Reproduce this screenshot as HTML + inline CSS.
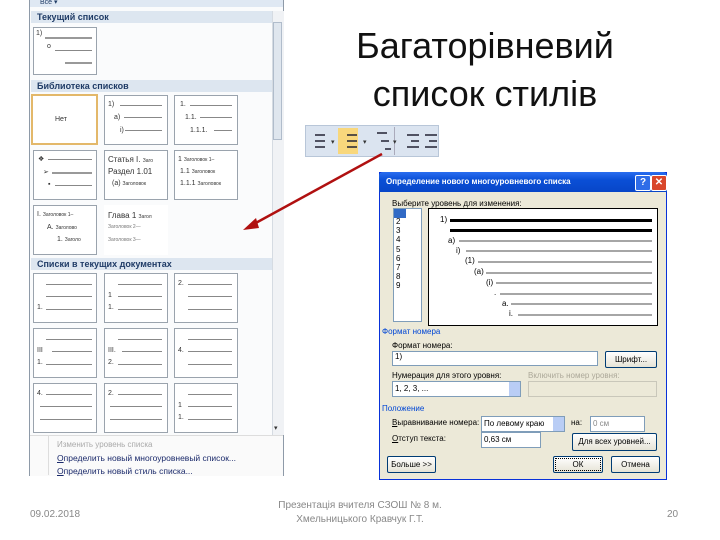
<!DOCTYPE html>
<html><head><meta charset="utf-8"><style>
body{margin:0;width:720px;height:540px;background:#fff;position:relative;overflow:hidden;font-family:"Liberation Sans",sans-serif}
.a{position:absolute}
.hd{position:absolute;left:31px;width:241px;height:12px;background:#dde6f0;font-size:9px;font-weight:bold;color:#1f3b66;line-height:12px;padding-left:6px;box-sizing:border-box}
.bx{position:absolute;width:64px;height:50px;border:1px solid #9aa3ad;background:#fff;box-sizing:border-box}
.ln{position:absolute;height:1px;background:#888}
.t{position:absolute;font-size:7px;color:#333;white-space:nowrap}
.dl{position:absolute;font-size:8px;color:#000;white-space:nowrap}
.btn{position:absolute;border:1px solid #003c74;background:linear-gradient(#fff,#e6e3d6);border-radius:2px;font-size:8px;text-align:center;box-sizing:border-box}
.inp{position:absolute;border:1px solid #7f9db9;background:#fff;box-sizing:border-box;font-size:8px;padding-left:2px}
.gl{position:absolute;height:2px;background:#a6a6a6}
</style></head><body>
<div class="a" style="left:29px;top:0;width:255px;height:476px;border:1px solid #8e9aa8;background:#fafbfc;box-sizing:border-box"></div>
<div class="a" style="left:30px;top:0;width:253px;height:7px;background:#dfe8f3"></div>
<div class="t" style="left:40px;top:-2px;font-size:7px;color:#1f3b66">Все ▾</div>
<div class="hd" style="top:11px">Текущий список</div>
<div class="bx" style="left:33px;top:27px;height:48px"></div>
<div class="t" style="left:36px;top:30px">1)</div><div class="ln" style="left:45px;top:37px;width:47px;height:2px;background:#999"></div>
<div class="t" style="left:47px;top:43px">o</div><div class="ln" style="left:55px;top:50px;width:37px"></div>
<div class="ln" style="left:65px;top:62px;width:27px;height:2px;background:#999"></div>
<div class="hd" style="top:80px">Библиотека списков</div>
<div class="bx" style="left:31px;top:94px;height:51px;width:67px;border:2px solid #e3b86a"></div>
<div class="t" style="left:55px;top:116px">Нет</div>
<div class="bx" style="left:104px;top:95px"></div><div class="bx" style="left:174px;top:95px"></div>
<div class="bx" style="left:33px;top:150px"></div><div class="bx" style="left:104px;top:150px"></div><div class="bx" style="left:174px;top:150px"></div>
<div class="bx" style="left:33px;top:205px"></div><div class="bx" style="left:104px;top:205px;border:none"></div>
<div class="t" style="left:108px;top:101px">1)</div><div class="ln" style="left:120px;top:105px;width:42px"></div>
<div class="t" style="left:114px;top:114px">a)</div><div class="ln" style="left:124px;top:117px;width:38px"></div>
<div class="t" style="left:120px;top:127px">i)</div><div class="ln" style="left:125px;top:130px;width:37px"></div>
<div class="t" style="left:180px;top:101px">1.</div><div class="ln" style="left:190px;top:105px;width:42px"></div>
<div class="t" style="left:185px;top:114px">1.1.</div><div class="ln" style="left:200px;top:117px;width:32px"></div>
<div class="t" style="left:190px;top:127px">1.1.1.</div><div class="ln" style="left:214px;top:130px;width:18px"></div>
<div class="t" style="left:38px;top:155px">❖</div><div class="ln" style="left:48px;top:159px;width:44px"></div>
<div class="t" style="left:43px;top:168px">➢</div><div class="ln" style="left:52px;top:172px;width:40px;height:2px;background:#999"></div>
<div class="t" style="left:48px;top:181px">▪</div><div class="ln" style="left:55px;top:185px;width:37px"></div>
<div class="t" style="left:108px;top:155px;font-size:8px">Статья I. <span style="font-size:5px">Заго</span></div>
<div class="t" style="left:108px;top:167px;font-size:8px">Раздел 1.01</div>
<div class="t" style="left:112px;top:180px">(a) <span style="font-size:5px">Заголовок</span></div>
<div class="t" style="left:178px;top:156px">1 <span style="font-size:5px">Заголовок 1–</span></div>
<div class="t" style="left:180px;top:168px">1.1 <span style="font-size:5px">Заголовок</span></div>
<div class="t" style="left:180px;top:180px">1.1.1 <span style="font-size:5px">Заголовок</span></div>
<div class="t" style="left:37px;top:211px">I. <span style="font-size:5px">Заголовок 1–</span></div>
<div class="t" style="left:47px;top:224px">A. <span style="font-size:5px">Заголово</span></div>
<div class="t" style="left:57px;top:236px">1. <span style="font-size:5px">Заголо</span></div>
<div class="t" style="left:108px;top:211px;font-size:8px">Глава 1 <span style="font-size:5px">Загол</span></div>
<div class="t" style="left:108px;top:224px;font-size:5px;color:#777">Заголовок 2—</div>
<div class="t" style="left:108px;top:237px;font-size:5px;color:#777">Заголовок 3—</div>
<div class="hd" style="top:258px">Списки в текущих документах</div>
<div class="bx" style="left:33px;top:273px"></div><div class="bx" style="left:104px;top:273px"></div><div class="bx" style="left:174px;top:273px"></div>
<div class="bx" style="left:33px;top:328px"></div><div class="bx" style="left:104px;top:328px"></div><div class="bx" style="left:174px;top:328px"></div>
<div class="bx" style="left:33px;top:383px"></div><div class="bx" style="left:104px;top:383px"></div><div class="bx" style="left:174px;top:383px"></div>
<div class="ln" style="left:46px;top:284px;width:46px"></div><div class="ln" style="left:46px;top:296px;width:46px"></div><div class="ln" style="left:46px;top:309px;width:46px"></div>
<div class="ln" style="left:118px;top:284px;width:44px"></div><div class="ln" style="left:118px;top:296px;width:44px"></div><div class="ln" style="left:118px;top:309px;width:44px"></div>
<div class="ln" style="left:188px;top:284px;width:44px"></div><div class="ln" style="left:188px;top:296px;width:44px"></div><div class="ln" style="left:188px;top:309px;width:44px"></div>
<div class="ln" style="left:46px;top:339px;width:46px"></div><div class="ln" style="left:52px;top:351px;width:40px"></div><div class="ln" style="left:46px;top:364px;width:46px"></div>
<div class="ln" style="left:118px;top:339px;width:44px"></div><div class="ln" style="left:122px;top:351px;width:40px"></div><div class="ln" style="left:118px;top:364px;width:44px"></div>
<div class="ln" style="left:188px;top:339px;width:44px"></div><div class="ln" style="left:188px;top:351px;width:44px"></div><div class="ln" style="left:188px;top:364px;width:44px"></div>
<div class="ln" style="left:46px;top:394px;width:46px"></div><div class="ln" style="left:40px;top:406px;width:52px"></div><div class="ln" style="left:40px;top:419px;width:52px"></div>
<div class="ln" style="left:118px;top:394px;width:44px"></div><div class="ln" style="left:110px;top:406px;width:52px"></div><div class="ln" style="left:110px;top:419px;width:52px"></div>
<div class="ln" style="left:188px;top:394px;width:44px"></div><div class="ln" style="left:188px;top:406px;width:44px"></div><div class="ln" style="left:188px;top:419px;width:44px"></div>
<div class="t" style="left:37px;top:304px">1.</div><div class="t" style="left:108px;top:292px">1</div><div class="t" style="left:108px;top:304px">1.</div><div class="t" style="left:178px;top:280px">2.</div>
<div class="t" style="left:37px;top:347px">III</div><div class="t" style="left:37px;top:359px">1.</div><div class="t" style="left:108px;top:347px">III.</div><div class="t" style="left:108px;top:359px">2.</div><div class="t" style="left:178px;top:347px">4.</div>
<div class="t" style="left:37px;top:390px">4.</div><div class="t" style="left:108px;top:390px">2.</div><div class="t" style="left:178px;top:402px">1</div><div class="t" style="left:178px;top:414px">1.</div>
<div class="a" style="left:272px;top:11px;width:11px;height:424px;background:#f0f2f5;border-left:1px solid #d5dbe2"></div>
<div class="a" style="left:273px;top:22px;width:9px;height:118px;background:#dfe6ee;border:1px solid #b0bccb;box-sizing:border-box"></div>
<div class="t" style="left:274px;top:424px;font-size:7px">▾</div>
<div class="a" style="left:30px;top:435px;width:253px;height:40px;background:#fafafa;border-top:1px solid #ddd"></div>
<div class="a" style="left:48px;top:435px;width:1px;height:40px;background:#ddd"></div>
<div class="t" style="left:57px;top:440px;font-size:8px;color:#aaa">Изменить уровень списка</div>
<div class="t" style="left:57px;top:453px;font-size:8.5px;color:#1b2a6b"><u>О</u>пределить новый многоуровневый список...</div>
<div class="t" style="left:57px;top:466px;font-size:8.5px;color:#1b2a6b"><u>О</u>пределить новый стиль списка...</div>
<div class="a" style="left:320px;top:22px;width:330px;text-align:center;font-size:36px;line-height:48px;color:#111">Багаторівневий<br>список стилів</div>
<div class="a" style="left:305px;top:125px;width:134px;height:32px;background:#dbe4f0;border:1px solid #b8c6d8;box-sizing:border-box"></div>
<div class="a" style="left:338px;top:128px;width:20px;height:26px;background:#f8d77c"></div>
<div class="a" style="left:394px;top:127px;width:1px;height:28px;background:#aab"></div>
<svg class="a" style="left:305px;top:125px" width="134" height="32">
<g stroke="#223" stroke-width="1.5"><line x1="10" y1="10" x2="20" y2="10"/><line x1="10" y1="16" x2="20" y2="16"/><line x1="10" y1="22" x2="20" y2="22"/>
<line x1="42" y1="10" x2="52" y2="10"/><line x1="42" y1="16" x2="52" y2="16"/><line x1="42" y1="22" x2="52" y2="22"/>
<line x1="72" y1="8" x2="82" y2="8"/><line x1="76" y1="16" x2="84" y2="16"/><line x1="80" y1="24" x2="86" y2="24"/>
<line x1="102" y1="10" x2="114" y2="10"/><line x1="106" y1="16" x2="114" y2="16"/><line x1="102" y1="22" x2="114" y2="22"/>
<line x1="120" y1="10" x2="132" y2="10"/><line x1="124" y1="16" x2="132" y2="16"/><line x1="120" y1="22" x2="132" y2="22"/></g>
<text x="26" y="19" font-size="7" fill="#333">▾</text><text x="58" y="19" font-size="7" fill="#333">▾</text><text x="88" y="19" font-size="7" fill="#333">▾</text>
</svg>
<svg class="a" style="left:0;top:0" width="720" height="540"><line x1="382" y1="154" x2="252" y2="225" stroke="#b01010" stroke-width="2.5"/><polygon points="243,230 256,218 259,228" fill="#b01010"/></svg>
<div class="a" style="left:379px;top:172px;width:288px;height:308px;background:#ece9d8;border:1px solid #0831d9;box-sizing:border-box"></div>
<div class="a" style="left:379px;top:172px;width:288px;height:20px;background:linear-gradient(#2a6ef0,#0a4fd6 40%,#0846c8);border-radius:4px 4px 0 0"></div>
<div class="dl" style="left:386px;top:177px;color:#fff;font-size:8px;font-weight:bold">Определение нового многоуровневого списка</div>
<div class="a" style="left:635px;top:175px;width:14px;height:14px;background:#2f6de8;border:1px solid #fff;border-radius:2px;color:#fff;font-size:10px;font-weight:bold;text-align:center;line-height:14px">?</div>
<div class="a" style="left:651px;top:175px;width:14px;height:14px;background:#d9472b;border:1px solid #fff;border-radius:2px;color:#fff;font-size:10px;font-weight:bold;text-align:center;line-height:14px">✕</div>
<div class="dl" style="left:392px;top:199px">Выберите уровень для изменения:</div>
<div class="a" style="left:393px;top:208px;width:29px;height:114px;background:#fff;border:1px solid #7f9db9;box-sizing:border-box"></div>
<div class="a" style="left:394px;top:209px;width:12px;height:9px;background:#316ac5"></div>
<div class="dl" style="left:396px;top:217px;line-height:9.2px">2<br>3<br>4<br>5<br>6<br>7<br>8<br>9</div>
<div class="a" style="left:428px;top:208px;width:230px;height:118px;background:#fff;border:1px solid #000;box-sizing:border-box"></div>
<div class="dl" style="left:440px;top:215px">1)</div><div class="a" style="left:450px;top:219px;width:202px;height:3px;background:#000"></div>
<div class="a" style="left:450px;top:229px;width:202px;height:3px;background:#000"></div>
<div class="dl" style="left:448px;top:236px">a)</div><div class="gl" style="left:459px;top:240px;width:193px"></div>
<div class="dl" style="left:456px;top:246px">i)</div><div class="gl" style="left:466px;top:250px;width:186px"></div>
<div class="dl" style="left:465px;top:256px">(1)</div><div class="gl" style="left:478px;top:261px;width:174px"></div>
<div class="dl" style="left:474px;top:267px">(a)</div><div class="gl" style="left:486px;top:272px;width:166px"></div>
<div class="dl" style="left:486px;top:278px">(i)</div><div class="gl" style="left:496px;top:282px;width:156px"></div>
<div class="dl" style="left:494px;top:288px">.</div><div class="gl" style="left:500px;top:293px;width:152px"></div>
<div class="dl" style="left:502px;top:299px">a.</div><div class="gl" style="left:511px;top:303px;width:141px"></div>
<div class="dl" style="left:509px;top:309px">i.</div><div class="gl" style="left:518px;top:314px;width:134px"></div>
<div class="dl" style="left:382px;top:327px;color:#0046d5">Формат номера</div>
<div class="dl" style="left:392px;top:341px">Формат номера:</div>
<div class="inp" style="left:392px;top:351px;width:206px;height:15px">1)</div>
<div class="btn" style="left:605px;top:351px;width:52px;height:17px;line-height:15px">Шрифт...</div>
<div class="dl" style="left:392px;top:371px">Нумерация для этого уровня:</div>
<div class="dl" style="left:528px;top:371px;color:#aca899">Включить номер уровня:</div>
<div class="inp" style="left:392px;top:381px;width:129px;height:16px;line-height:14px">1, 2, 3, ...</div>
<div class="a" style="left:509px;top:382px;width:11px;height:14px;background:#b9cdf5"></div>
<div class="inp" style="left:528px;top:381px;width:129px;height:16px;border-color:#c9c7ba;background:#ece9d8"></div>
<div class="dl" style="left:382px;top:404px;color:#0046d5">Положение</div>
<div class="dl" style="left:392px;top:418px"><u>В</u>ыравнивание номера:</div>
<div class="inp" style="left:481px;top:416px;width:84px;height:16px;line-height:14px">По левому краю</div>
<div class="a" style="left:553px;top:417px;width:11px;height:14px;background:#b9cdf5"></div>
<div class="dl" style="left:571px;top:418px">на:</div>
<div class="inp" style="left:590px;top:416px;width:55px;height:16px;line-height:14px;color:#888">0 см</div>
<div class="dl" style="left:392px;top:434px"><u>О</u>тступ текста:</div>
<div class="inp" style="left:481px;top:432px;width:60px;height:16px;line-height:14px">0,63 см</div>
<div class="btn" style="left:572px;top:433px;width:85px;height:18px;line-height:16px"><u>Д</u>ля всех уровней...</div>
<div class="btn" style="left:387px;top:456px;width:49px;height:17px;line-height:15px">Больше &gt;&gt;</div>
<div class="btn" style="left:553px;top:456px;width:50px;height:17px;line-height:15px;outline:1px dotted #000;outline-offset:-3px">ОК</div>
<div class="btn" style="left:611px;top:456px;width:49px;height:17px;line-height:15px">Отмена</div>
<div class="a" style="left:30px;top:509px;font-size:10px;color:#888">09.02.2018</div>
<div class="a" style="left:240px;top:499px;width:240px;text-align:center;font-size:10px;color:#888;line-height:14px">Презентація вчителя СЗОШ № 8 м.<br>Хмельницького Кравчук Г.Т.</div>
<div class="a" style="left:667px;top:509px;font-size:10px;color:#888">20</div>
</body></html>
